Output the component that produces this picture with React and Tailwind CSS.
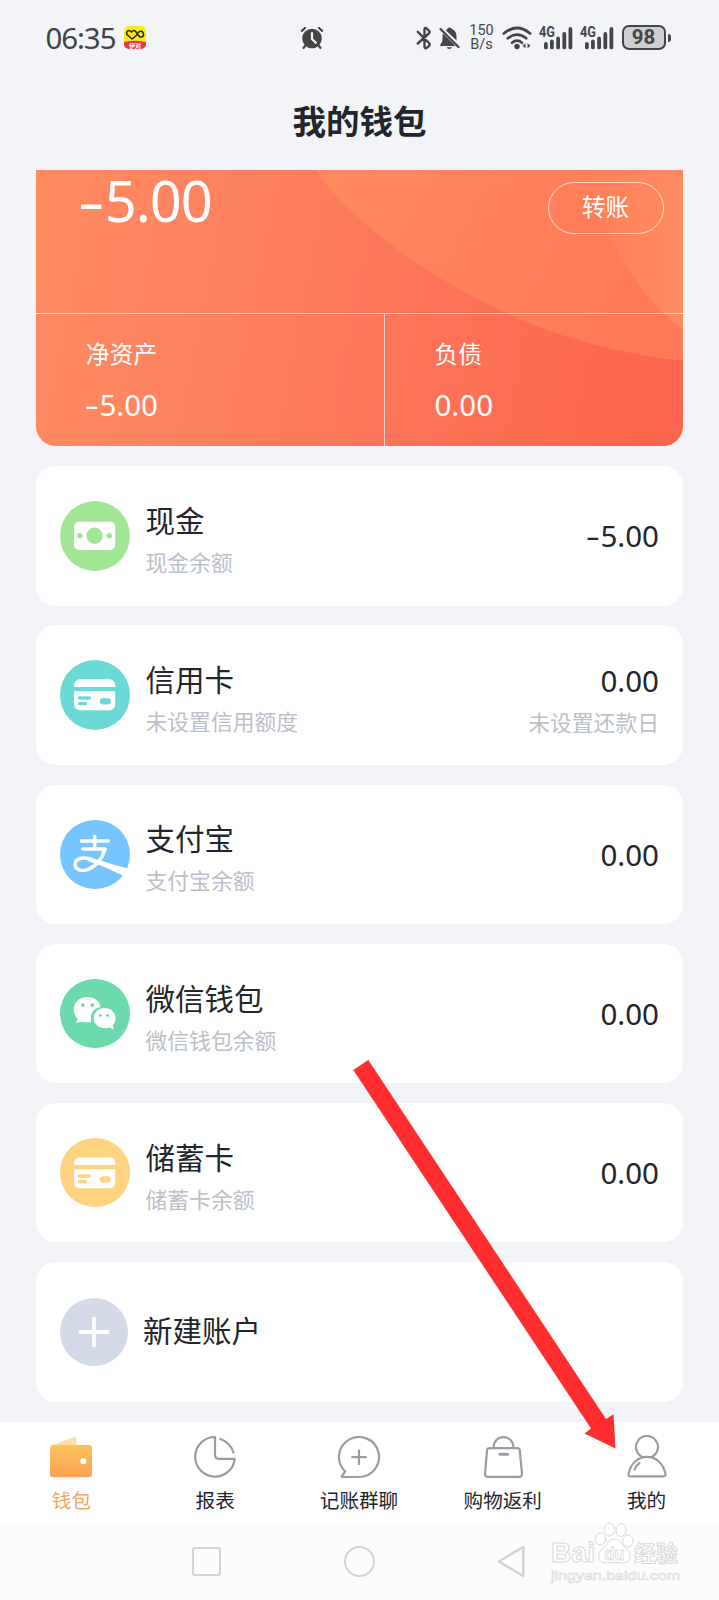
import { clsx } from "clsx";

const CashIcon = () => (
  <svg viewBox="0 0 70 70" className="w-full h-full">
    <rect x="14.200" y="21" width="41.400" height="28.300" rx="5" fill="#fff" />
    <circle cx="34.800" cy="35" r="8.200" fill="#a0e695" />
    <circle cx="20" cy="35" r="2.800" fill="#a0e695" />
    <circle cx="49.600" cy="35" r="2.800" fill="#a0e695" />
  </svg>
);

const CardIcon = ({ color }) => (
  <svg viewBox="0 0 70 70" className="w-full h-full">
    <path d="M14.200 27.200V25a5.500 5.500 0 0 1 5.500-5.500h30.400a5.500 5.500 0 0 1 5.500 5.500v2.200z" fill="#fff" />
    <path d="M14.200 31.500h41.400V45a5.500 5.500 0 0 1-5.500 5.500H19.700a5.500 5.500 0 0 1-5.500-5.500z" fill="#fff" />
    <rect x="18" y="36.600" width="13.200" height="3.400" rx="1.700" fill={color} />
    <rect x="18" y="42.400" width="9.400" height="3.200" rx="1.600" fill={color} />
    <rect x="40.200" y="38.400" width="11" height="6.400" rx="3.200" fill={color} />
  </svg>
);

const AlipayIcon = () => (
  <svg viewBox="0 0 70 70" className="w-full h-full" fill="none" stroke="#fff">
    <path d="M21.500 21.200h27M23 29.200h22.500M35 16.500V29" strokeWidth="3.400" strokeLinecap="round" />
    <path
      d="M45.200 29.500C43 38 37 46 29 49.500C22 52.500 15 50 15.200 44.500C15.500 38.500 23 37 31 39.500"
      strokeWidth="3.600"
      strokeLinecap="round"
      strokeLinejoin="round"
    />
    <path d="M28 37.200C40 40 52 45 68 48.500L63.500 56C53 51 42 45.500 28 41.200z" fill="#fff" stroke="none" />
  </svg>
);

const WechatIcon = () => (
  <svg viewBox="0 0 70 70" className="w-full h-full">
    <path
      d="M27.500 18.200c-8 0-13.500 5.400-13.500 12.400 0 4 1.200 7.200 3.800 9.400l-1.600 4.400 5.600-1.400c2.600.7 6 .8 9.400.5-1.500-8.500 3.300-14.500 9.700-15.200-1-5.700-6-10.100-13.400-10.100z"
      fill="#fff"
    />
    <path
      d="M45.200 29.200c-6.600 0-11.200 4.400-11.200 10.200s4.700 10.200 11.200 10.200c1.700 0 3.300-.2 4.800-.7l4 2.300-.8-4.700c1.800-1.800 2.800-4.300 2.800-7 0-5.700-4.500-10.300-10.800-10.300z"
      fill="#fff"
    />
    <circle cx="23" cy="26.300" r="1.900" fill="#6ddaad" />
    <circle cx="32.500" cy="26.300" r="1.900" fill="#6ddaad" />
    <circle cx="40.500" cy="36.700" r="1.500" fill="#6ddaad" />
    <circle cx="48" cy="36.700" r="1.500" fill="#6ddaad" />
  </svg>
);

const accounts = [
  { name: "现金", note: "现金余额", amount: "-5.00", bg: "bg-[#a0e695]", icon: <CashIcon /> },
  {
    name: "信用卡",
    note: "未设置信用额度",
    amount: "0.00",
    due: "未设置还款日",
    bg: "bg-[#6bdad7]",
    icon: <CardIcon color="#6bdad7" />,
  },
  { name: "支付宝", note: "支付宝余额", amount: "0.00", bg: "bg-[#77c5fe]", icon: <AlipayIcon /> },
  { name: "微信钱包", note: "微信钱包余额", amount: "0.00", bg: "bg-[#6ddaad]", icon: <WechatIcon /> },
  { name: "储蓄卡", note: "储蓄卡余额", amount: "0.00", bg: "bg-[#ffd37f]", icon: <CardIcon color="#ffd37f" /> },
];

const tabs = [
  {
    label: "钱包",
    active: true,
    icon: (
      <>
        <defs>
          <linearGradient id="wallet" x1="0" y1="0" x2="0" y2="1">
            <stop offset="0" stopColor="#fac35c" />
            <stop offset="1" stopColor="#fda055" />
          </linearGradient>
        </defs>
        <path d="M3 10.500L24.500 2.200Q27.500 1.300 27.500 4V12H3z" fill="#fddfa8" />
        <rect x="1" y="10" width="42" height="32.300" rx="3" fill="url(#wallet)" />
        <circle cx="34.300" cy="26.200" r="3" fill="#fff" />
      </>
    ),
  },
  {
    label: "报表",
    icon: (
      <path d="M22 2A19.800 19.800 0 1 0 41.700 23.800H25.500Q22 23.800 22 20.300V2M27.300 4Q37.500 7.500 40.500 17.800" />
    ),
  },
  {
    label: "记账群聊",
    icon: (
      <>
        <path d="M22 42H5.500Q4.300 42 5 40.800L8.300 36.600A20 20 0 1 1 22 42z" />
        <path d="M22 15.500V29M15.200 22.200H28.800" />
      </>
    ),
  },
  {
    label: "购物返利",
    icon: (
      <>
        <path d="M8.500 13.200H36Q38.500 13.200 38.800 15.500L41 38.500Q41.200 41.800 38 41.800H7Q3.800 41.800 4 38.500L6 15.500Q6.300 13.200 8.500 13.200z" />
        <path d="M12.500 13C12.500 6 17 2.200 22.500 2.200S32.500 6 32.500 13" />
        <path d="M19 19.300H26.500" strokeWidth="3" />
      </>
    ),
  },
  {
    label: "我的",
    icon: (
      <>
        <path d="M17 21.800A11 11 0 1 1 27 21.800" />
        <path d="M5 41.400Q3.200 41.400 3.600 39C5.500 28.500 13 21.800 22 21.800S38.500 28.500 40.400 39Q40.800 41.400 39 41.400z" />
        <path d="M9.500 34.500Q11 30.500 14.500 28" />
      </>
    ),
  },
];

// the minus sign is drawn wider than the hyphen of the text font
function Money({ value, className }) {
  const negative = value.startsWith("-");
  return (
    <span className={clsx("font-['Noto_Sans',sans-serif] whitespace-nowrap", className)}>
      {negative && <span className="inline-block scale-x-150 mr-[0.1em]">-</span>}
      {negative ? value.slice(1) : value}
    </span>
  );
}

function Signal() {
  return (
    <svg width="34" height="24" viewBox="0 0 34 24" className="overflow-visible" fill="#444547">
      <text x="0" y="11.300" fontSize="14" fontWeight="700" fontFamily="Roboto, sans-serif" textLength="16" lengthAdjust="spacingAndGlyphs">
        4G
      </text>
      <rect x="5" y="16" width="3.800" height="7.300" rx="1.900" />
      <rect x="11" y="13.500" width="3.800" height="9.800" rx="1.900" />
      <rect x="17.200" y="10.500" width="3.800" height="12.800" rx="1.900" />
      <rect x="23.400" y="6" width="3.800" height="17.300" rx="1.900" />
      <rect x="29.500" y="1" width="3.800" height="22.300" rx="1.900" />
    </svg>
  );
}

function StatusBar() {
  return (
    <div className="h-[75px] pl-[45.500px] flex items-center text-[#444547]">
      <div className="w-[78.500px] font-['Noto_Sans',sans-serif] text-[29.5px] leading-none tracking-[-1.1px]">06:35</div>
      <svg width="22" height="23" viewBox="0 0 22 23">
        <rect width="22" height="23" rx="5" fill="#fdea18" />
        <path d="M0 16Q11 13.500 22 16V18a5 5 0 0 1-5 5H5a5 5 0 0 1-5-5z" fill="#ee3350" />
        <path
          d="M8 13L3 8.500C1.500 6 4.500 2.800 7.500 6C10 3 11.500 4.500 14.500 9.500C16 12 20 11.500 19.500 8C19 4.500 15 4.500 13.500 7.500C12 11 10 11.500 8 13z"
          fill="none"
          stroke="#2b260c"
          strokeWidth="1.500"
        />
        <text x="11" y="21.500" fontSize="6" fontWeight="700" fill="#fff" textAnchor="middle" fontFamily="Noto Sans CJK SC, sans-serif">
          伊对
        </text>
      </svg>
      <svg width="24" height="24" viewBox="0 0 24 24" className="ml-[154px]" fill="none" stroke="#444547" strokeLinecap="round">
        <circle cx="12" cy="12.500" r="9.800" fill="#444547" stroke="none" />
        <path d="M1.800 4.800L5 2M22.200 4.800L19 2M5.500 19.500L3.500 22M18.500 19.500L20.500 22" strokeWidth="2.200" />
        <path d="M12 7V13L15.800 16.800" stroke="#f2f4f8" strokeWidth="2.200" />
      </svg>
      <svg width="16" height="24" viewBox="0 0 16 24" className="ml-[92px]" fill="none" stroke="#444547" strokeWidth="2.400" strokeLinecap="round" strokeLinejoin="round">
        <path d="M1.800 5.800L13 17Q14.500 18.500 12.500 20.500L10.500 22Q8.500 23 8.500 20.500V3.500Q8.500 1 10.500 2.300L12.800 4.500Q14.300 6 12.800 7.500L1.800 17.500" />
      </svg>
      <svg width="21" height="24" viewBox="0 0 21 24" className="ml-[7px]" fill="#444547">
        <path d="M7 4.500C8.500 3 8.800 1.500 10.200 1.500S12.200 2.300 13.500 3.200C17 5 17.500 8 17.500 11V14.500z" />
        <path d="M4 7.500L16.500 20H1.500Q0.500 19 2 17.500C3.500 16 3.500 14.500 3.500 11.500Q3.500 9 4 7.500z" />
        <path d="M7.500 21.300H13Q12.500 23 10.300 23T7.500 21.300z" />
        <path d="M1.500 3L19.500 21" stroke="#444547" strokeWidth="2.200" strokeLinecap="round" />
      </svg>
      <div className="ml-[8.500px] w-[26px] text-center font-[Roboto,sans-serif] text-[14.500px] leading-[14px]">
        <div>150</div>
        <div>B/s</div>
      </div>
      <svg width="30" height="24" viewBox="0 0 30 24" className="ml-[7px]" fill="none" stroke="#444547" strokeWidth="2.700" strokeLinecap="round">
        <path d="M1.800 7.500Q15 -3.500 28.200 7.500M5.800 12.300Q15 4.800 24.200 12.300M10 16.700Q15 12.700 20 16.700" />
        <circle cx="15" cy="20.500" r="2.700" fill="#444547" stroke="none" />
        <path d="M23.500 17.300V22.300L20.500 19.800zM25.500 17.300V22.300L28.500 19.800z" fill="#444547" stroke="none" />
      </svg>
      <div className="ml-[7.500px] flex gap-[7px]">
        <Signal />
        <Signal />
      </div>
      <div className="ml-[7.500px] flex items-center gap-[2px]">
        <div className="w-[44px] h-[25px] rounded-[7px] border-2 border-[#444547] bg-[#cdced1] flex items-center justify-center font-[Roboto,sans-serif] font-bold text-[20.500px] leading-none">
          98
        </div>
        <div className="w-[3px] h-[8px] rounded-r-full bg-[#444547]"></div>
      </div>
    </div>
  );
}

function BalanceCard() {
  return (
    <section className="relative mx-[36px] h-[276px] rounded-b-[20px] text-white bg-[linear-gradient(101deg,#ff8b60_0%,#fd8361_25%,#fc7459_58%,#fc644d_100%)]">
      <svg viewBox="0 0 647 276" className="absolute inset-0 w-full h-full">
        <defs>
          <linearGradient id="wave" x1="0" y1="0" x2="1" y2="0.300">
            <stop offset="0" stopColor="#ff8a60" />
            <stop offset="1" stopColor="#ff7a57" />
          </linearGradient>
          <linearGradient id="edge" x1="0" y1="0" x2="1" y2="0">
            <stop offset="0" stopColor="#ff8059" />
            <stop offset="1" stopColor="#ff8b61" />
          </linearGradient>
        </defs>
        <path d="M279 0C324 60 394 107 470 143C524 168 584 184 647 191V0z" fill="url(#wave)" />
        <path d="M555 0C562 45 584 110 647 160V0z" fill="url(#edge)" />
      </svg>
      <div className="relative h-full flex flex-col">
        <div className="h-[144px] pl-[46px] pr-[19.500px] flex items-start justify-between border-b border-white/70">
          <Money value="-5.00" className="text-[56px] leading-[60px] tracking-[-1px]" />
          <button className="mt-[12px] pb-[2px] w-[116px] h-[52px] rounded-full border border-white/70 text-[23.500px] leading-none">
            转账
          </button>
        </div>
        <div className="flex-1 flex">
          <div className="w-[349px] pl-[50px] pt-[21px] border-r border-white/70">
            <div className="text-[23.700px] leading-[36px]">净资产</div>
            <Money value="-5.00" className="block ml-[1px] mt-[16px] text-[29.500px] leading-[36px]" />
          </div>
          <div className="pl-[49.500px] pt-[21px]">
            <div className="text-[23.700px] leading-[36px]">负债</div>
            <Money value="0.00" className="block mt-[16px] text-[29.500px] leading-[36px]" />
          </div>
        </div>
      </div>
    </section>
  );
}

function AccountRow({ account }) {
  return (
    <div className="h-[139.300px] rounded-[20px] bg-white px-[24px] flex items-center">
      <div className={clsx("w-[69.500px] h-[69.500px] rounded-full shrink-0", account.bg)}>{account.icon}</div>
      <div className="ml-[16px] pt-[10px]">
        <div className="text-[29.500px] leading-[41px]">{account.name}</div>
        <div className="text-[21.800px] leading-[43px] text-[#bcc0c9]">{account.note}</div>
      </div>
      {account.due ? (
        <div className="ml-auto pt-[9px] text-right">
          <Money value={account.amount} className="block text-[29.500px] leading-[43px]" />
          <div className="text-[21.800px] leading-[39px] text-[#bcc0c9]">{account.due}</div>
        </div>
      ) : (
        <Money value={account.amount} className="ml-auto pt-[1px] text-[29.500px] leading-[42px]" />
      )}
    </div>
  );
}

function TabBar() {
  return (
    <nav className="mt-[20px] h-[102px] bg-white grid grid-cols-5">
      {tabs.map((tab) => (
        <div key={tab.label} className="pt-[13.500px] pr-[1px] flex flex-col items-center">
          <svg width="44" height="44" viewBox="0 0 44 44" fill="none" stroke={tab.active ? "none" : "#999ca4"} strokeWidth="2.200" strokeLinecap="round" strokeLinejoin="round">
            {tab.icon}
          </svg>
          <span className={clsx("mt-[6.500px] text-[19.600px] leading-[28px]", tab.active && "text-[#efa764]")}>
            {tab.label}
          </span>
        </div>
      ))}
    </nav>
  );
}

function Watermark() {
  return (
    <svg width="136" height="66" viewBox="0 0 136 66" className="absolute left-[548px] top-[1520px]" fill="#fff" stroke="#d9d9d9" strokeWidth="1">
      <g fontFamily="Liberation Sans, sans-serif" fontWeight="700">
        <text x="3" y="41.500" fontSize="28" textLength="44" lengthAdjust="spacingAndGlyphs">
          Bai
        </text>
        <ellipse cx="52.500" cy="19" rx="5" ry="6" />
        <ellipse cx="61.500" cy="9.500" rx="5" ry="6.500" />
        <ellipse cx="73" cy="10" rx="5" ry="6.500" />
        <ellipse cx="80" cy="21" rx="5" ry="6" />
        <path d="M66.500 19C60 19 60 25 55 28.500C49 32.500 49 43 58 43Q66.500 41.500 75 43C84 43 84 33 78 28.500C73 25 73 19 66.500 19z" />
        <text x="56.500" y="40" fontSize="18" textLength="20" lengthAdjust="spacingAndGlyphs" strokeWidth="0.800">
          du
        </text>
      </g>
      <text x="86" y="41" fontSize="22" fontWeight="700" fontFamily="Noto Sans CJK SC, sans-serif">
        经验
      </text>
      <text x="3" y="60" fontSize="13" fontFamily="Liberation Sans, sans-serif" textLength="129" lengthAdjust="spacingAndGlyphs" strokeWidth="0.600">
        jingyan.baidu.com
      </text>
    </svg>
  );
}

function SystemNav() {
  return (
    <div className="h-[76.500px] bg-[#fcfcfc] pl-[192px] flex items-center">
      <div className="w-[29px] h-[29px] rounded-[3px] border-[2.500px] border-[#d3d3d3]"></div>
      <div className="ml-[123px] w-[31px] h-[31px] rounded-full border-[2.500px] border-[#d3d3d3]"></div>
      <svg width="28" height="33" viewBox="0 0 28 33" className="ml-[122px]" fill="none" stroke="#d3d3d3" strokeWidth="2.500" strokeLinejoin="round">
        <path d="M26.300 2V31L1.800 16.500z" />
      </svg>
    </div>
  );
}

export default function App() {
  return (
    <div className="relative w-[719px] h-[1600px] overflow-hidden bg-[#f2f4f8] text-[#22252b] font-['Noto_Sans_CJK_SC',sans-serif]">
      <StatusBar />
      <h1 className="h-[95px] pt-[20px] text-center text-[33.500px] leading-[50px] font-bold">我的钱包</h1>
      <BalanceCard />

      {/* Accounts */}
      <div className="mx-[36px] mt-[20.300px] flex flex-col gap-[19.900px]">
        {accounts.map((account) => (
          <AccountRow key={account.name} account={account} />
        ))}
        <div className="h-[139.300px] rounded-[20px] bg-white px-[24px] flex items-center">
          <div className="w-[68px] h-[68px] rounded-full bg-[#d5dae8] flex items-center justify-center">
            <svg width="32" height="32" viewBox="0 0 32 32" stroke="#fff" strokeWidth="4" strokeLinecap="round">
              <path d="M16 2.500V29.500M2.500 16H29.500" />
            </svg>
          </div>
          <div className="ml-[15px] pb-[5px] text-[29.500px] leading-[42px]">新建账户</div>
        </div>
      </div>

      <TabBar />
      <SystemNav />

      {/* Pointer to the profile tab */}
      <svg width="719" height="1600" viewBox="0 0 719 1600" className="absolute left-0 top-0 pointer-events-none">
        <path d="M353.300 1070L368.300 1060L606 1419L613.500 1414.300L615.500 1448.500L584.500 1433.500L591 1428.500z" fill="#ff2d2d" />
      </svg>
      <Watermark />
    </div>
  );
}
